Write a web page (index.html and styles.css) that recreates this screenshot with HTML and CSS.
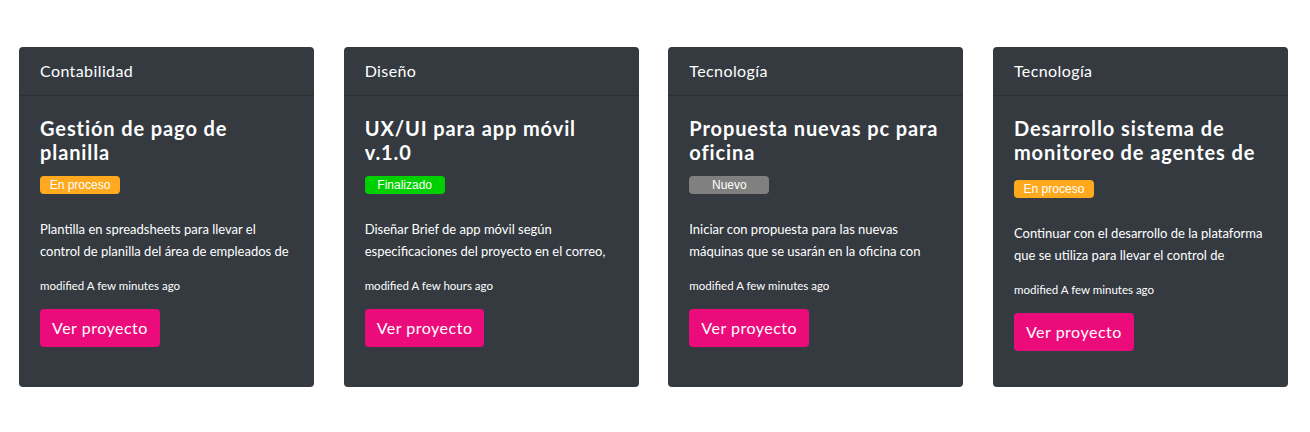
FILE: index.html
```html
<!DOCTYPE html>
<html lang="es">
<head>
<meta charset="utf-8">
<title>Proyectos</title>
<link rel="stylesheet" href="styles.css">
</head>
<body>
<main class="grid">
  <article class="card">
    <header class="card-header">Contabilidad</header>
    <div class="card-body">
      <h4 class="title">Gestión de pago de planilla</h4>
      <span class="badge badge-progress">En proceso</span>
      <p class="desc">Plantilla en spreadsheets para llevar el control de planilla del área de empleados de la empresa durante el mes.</p>
      <p class="meta">modified A few minutes ago</p>
      <a class="btn" href="#">Ver proyecto</a>
    </div>
  </article>
  <article class="card">
    <header class="card-header">Diseño</header>
    <div class="card-body">
      <h4 class="title">UX/UI para app móvil v.1.0</h4>
      <span class="badge badge-done">Finalizado</span>
      <p class="desc">Diseñar Brief de app móvil según especificaciones del proyecto en el correo, enviado por el cliente.</p>
      <p class="meta">modified A few hours ago</p>
      <a class="btn" href="#">Ver proyecto</a>
    </div>
  </article>
  <article class="card">
    <header class="card-header">Tecnología</header>
    <div class="card-body">
      <h4 class="title">Propuesta nuevas pc para oficina</h4>
      <span class="badge badge-new">Nuevo</span>
      <p class="desc">Iniciar con propuesta para las nuevas máquinas que se usarán en la oficina con nuestros nuevos empleados.</p>
      <p class="meta">modified A few minutes ago</p>
      <a class="btn" href="#">Ver proyecto</a>
    </div>
  </article>
  <article class="card">
    <header class="card-header">Tecnología</header>
    <div class="card-body">
      <h4 class="title title-long">Desarrollo sistema de monitoreo de agentes de ventas</h4>
      <span class="badge badge-progress">En proceso</span>
      <p class="desc">Continuar con el desarrollo de la plataforma que se utiliza para llevar el control de nuestros agentes de ventas.</p>
      <p class="meta">modified A few minutes ago</p>
      <a class="btn" href="#">Ver proyecto</a>
    </div>
  </article>
</main>
</body>
</html>
```
FILE: styles.css
```css
* { box-sizing: border-box; }

body {
  margin: 0;
  background: #ffffff;
  font-family: Lato, "Open Sans", sans-serif;
  color: #ffffff;
}

.grid {
  display: grid;
  grid-template-columns: repeat(4, 295px);
  column-gap: 29.67px;
  padding: 47px 0 0 19px;
}

.card {
  height: 340px;
  background: #343a40;
  border-radius: 4px;
  overflow: hidden;
}

.card-header {
  padding: 12px 21px;
  font-size: 16px;
  line-height: 24px;
  letter-spacing: 0.4px;
  border-bottom: 1px solid rgba(0, 0, 0, 0.18);
}

.card-body {
  display: flex;
  flex-direction: column;
  align-items: flex-start;
  padding: 20px 21px;
}

.title {
  margin: 0 0 12px;
  font-size: 20px;
  line-height: 24px;
  font-weight: 700;
  letter-spacing: 0.9px;
  height: 48px;
  overflow: hidden;
}

.title-long { margin-bottom: 16px; }

.badge {
  display: block;
  width: 80px;
  height: 18px;
  border-radius: 4px;
  font-family: "Liberation Sans", Arial, sans-serif;
  font-size: 12px;
  line-height: 18px;
  text-align: center;
  color: #ffffff;
}

.badge-progress { background: #ffa91f; }
.badge-done { background: #00d000; }
.badge-new { background: #808080; }

.desc {
  margin: 24px 0 0;
  font-size: 13px;
  line-height: 22px;
  height: 44px;
  overflow: hidden;
}

.meta {
  margin: 16px 0 0;
  font-size: 11.5px;
  line-height: 16px;
}

.btn {
  margin-top: 15px;
  display: inline-block;
  padding: 6px 12px;
  border-radius: 4px;
  background: #ec0b7b;
  color: #ffffff;
  font-size: 16px;
  line-height: 26px;
  letter-spacing: 0.5px;
  text-decoration: none;
}
```
